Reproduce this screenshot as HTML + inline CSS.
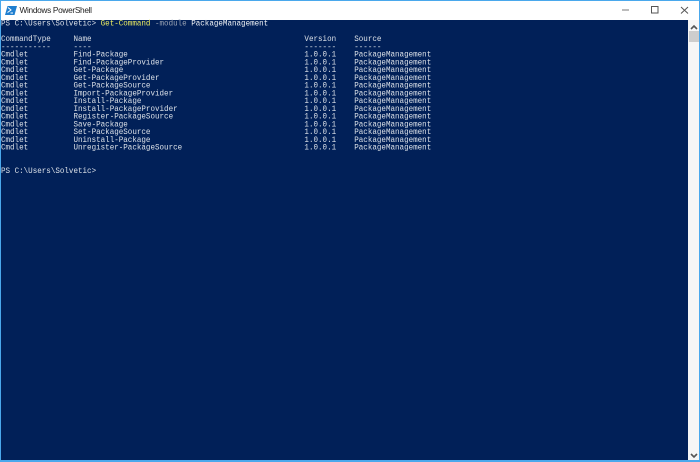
<!DOCTYPE html>
<html>
<head>
<meta charset="utf-8">
<style>
html,body{margin:0;padding:0;width:700px;height:462px;overflow:hidden;background:#fff}
#win{position:absolute;left:0;top:0;width:700px;height:462px;background:#fff;overflow:hidden}
.b{position:absolute;background:#4aa8ec}
#title{position:absolute;left:19.5px;top:3px;font:8.3px/14px "Liberation Sans",sans-serif;color:#222;letter-spacing:-.32px;white-space:nowrap}
#con{position:absolute;left:1px;top:20px;width:687px;height:440px;background:#012058}
#sb{position:absolute;left:688px;top:20px;width:11px;height:440px;background:#f6f6f6}
#thumb{position:absolute;left:1px;top:11px;width:10px;height:11px;background:#cdcdcd}
pre{position:absolute;left:.7px;top:20.2px;margin:0;font:30.2px/27px "Liberation Mono",monospace;color:#dce1e8;letter-spacing:0;white-space:pre;transform:scale(.25,.28704);transform-origin:0 0}
.y{color:#eded60}.g{color:#9aa3b3}.w{color:#f2f4f6}
svg{position:absolute}
</style>
</head>
<body>
<div id="win">
<div class="b" style="left:0;top:0;width:700px;height:1px"></div>
<div class="b" style="left:0;top:0;width:1px;height:462px"></div>
<div class="b" style="left:699px;top:0;width:1px;height:462px"></div>
<div class="b" style="left:0;top:460px;width:700px;height:2px"></div>
<svg style="left:5px;top:5px" width="12" height="11" viewBox="0 0 12 11"><path d="M2.5 1H12L9.5 10H0Z" fill="#1f7fd0"/><path d="M3 2.5L6 5L2.5 7.5" fill="none" stroke="#fff" stroke-width="1"/><path d="M5.5 8H8" stroke="#fff" stroke-width="1"/></svg>
<div id="title">Windows PowerShell</div>
<svg style="left:620px;top:3px" width="75" height="14" viewBox="0 0 75 14">
<path d="M2 7H9" stroke="#a0a0a0" stroke-width="1.4"/>
<rect x="31.5" y="3.5" width="6.5" height="6.5" fill="none" stroke="#555" stroke-width="1"/>
<path d="M61 4L68 10.5M68 4L61 10.5" stroke="#555" stroke-width="1"/>
</svg>
<div id="con"></div>
<div id="sb"><div id="thumb"></div>
<svg style="left:1.5px;top:4px" width="8" height="6" viewBox="0 0 8 6"><path d="M1 5L4 2L7 5" fill="none" stroke="#555" stroke-width="1.6"/></svg>
<svg style="left:1.5px;top:433px" width="8" height="6" viewBox="0 0 8 6"><path d="M1 1L4 4L7 1" fill="none" stroke="#555" stroke-width="1.6"/></svg>
</div>
<pre>PS C:\Users\Solvetic&gt; <span class="y">Get-Command</span> <span class="g">-module</span> <span class="w">PackageManagement</span>

CommandType     Name                                               Version    Source
-----------     ----                                               -------    ------
Cmdlet          Find-Package                                       1.0.0.1    PackageManagement
Cmdlet          Find-PackageProvider                               1.0.0.1    PackageManagement
Cmdlet          Get-Package                                        1.0.0.1    PackageManagement
Cmdlet          Get-PackageProvider                                1.0.0.1    PackageManagement
Cmdlet          Get-PackageSource                                  1.0.0.1    PackageManagement
Cmdlet          Import-PackageProvider                             1.0.0.1    PackageManagement
Cmdlet          Install-Package                                    1.0.0.1    PackageManagement
Cmdlet          Install-PackageProvider                            1.0.0.1    PackageManagement
Cmdlet          Register-PackageSource                             1.0.0.1    PackageManagement
Cmdlet          Save-Package                                       1.0.0.1    PackageManagement
Cmdlet          Set-PackageSource                                  1.0.0.1    PackageManagement
Cmdlet          Uninstall-Package                                  1.0.0.1    PackageManagement
Cmdlet          Unregister-PackageSource                           1.0.0.1    PackageManagement


PS C:\Users\Solvetic&gt;</pre>
</div>
</body>
</html>
